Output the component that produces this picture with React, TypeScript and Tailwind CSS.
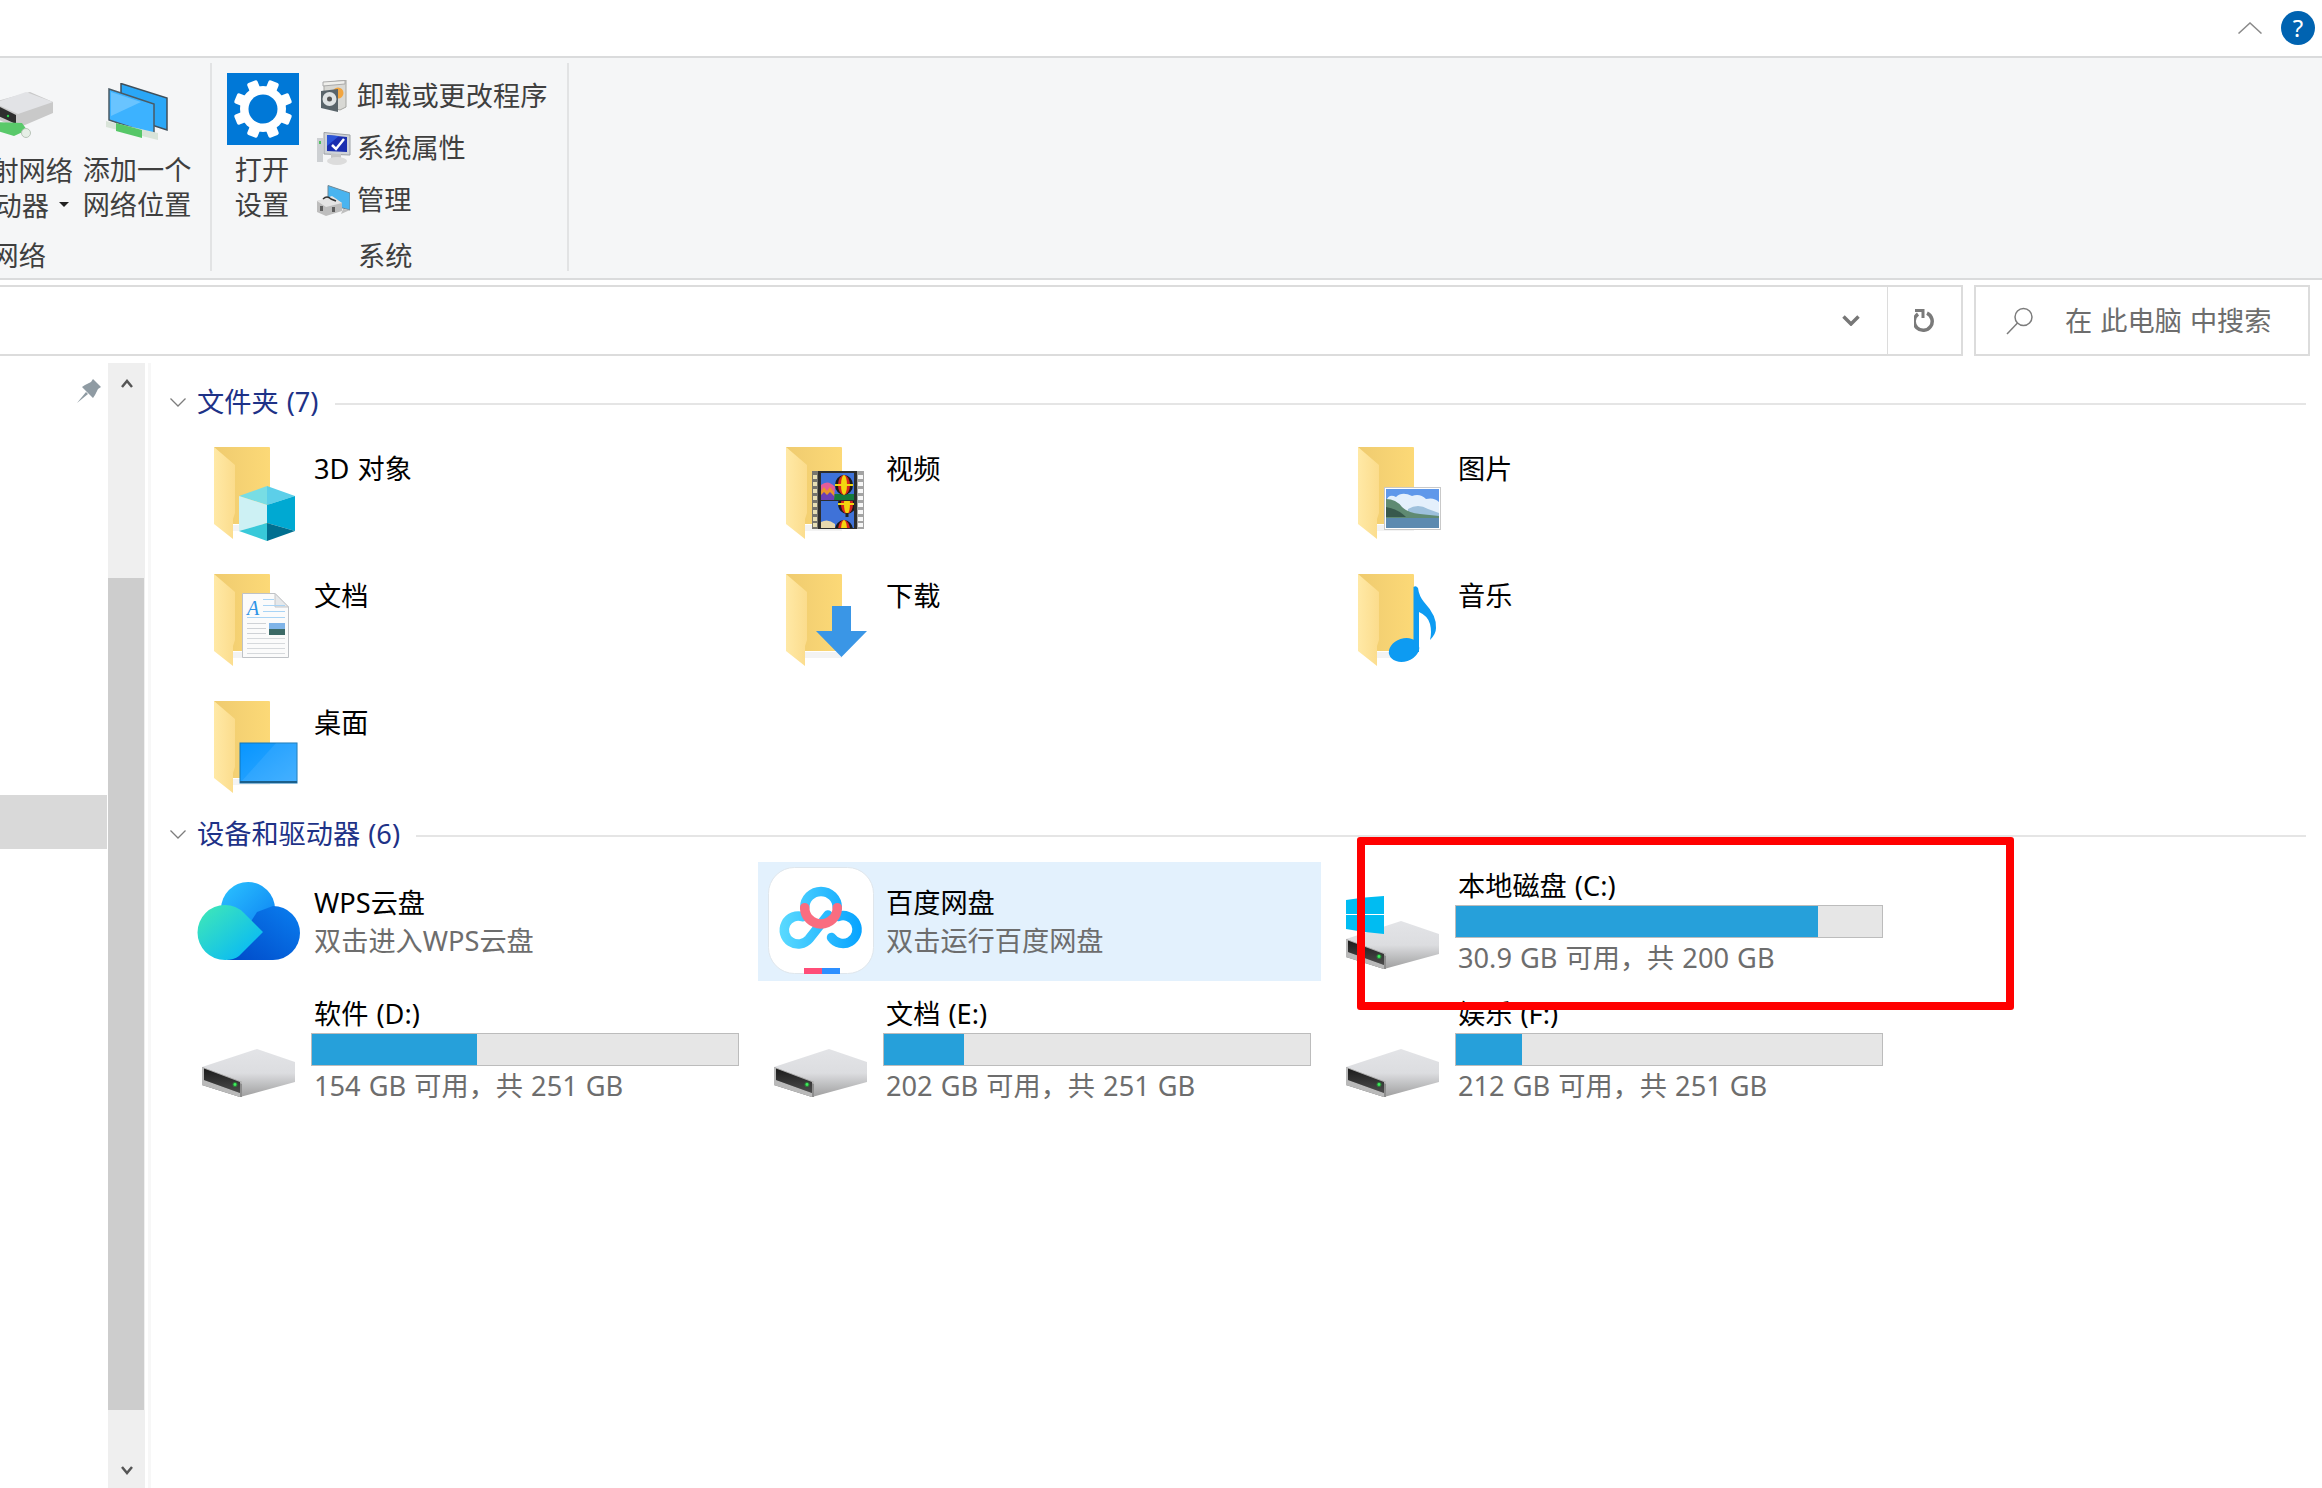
import React from 'react';

const FolderIcon = ({ children }: { children?: React.ReactNode }) => (
  <svg width="90" height="100" viewBox="0 0 90 100" className="mt-[11px] ml-[28px] shrink-0">
    <defs>
      <linearGradient id="folderBack" x1="0" x2="1" y1="0" y2="0">
        <stop offset="0" stopColor="#efcb6f" />
        <stop offset="1" stopColor="#fcd977" />
      </linearGradient>
      <linearGradient id="folderFront" x1="0" x2="1" y1="0" y2="0">
        <stop offset="0" stopColor="#ffe9a6" />
        <stop offset="1" stopColor="#fbdc8c" />
      </linearGradient>
    </defs>
    <path d="M0 0H55a1 1 0 0 1 1 1V77H14Z" fill="url(#folderBack)" />
    <path d="M19 78H56V84H19Z" fill="#f3f3f3" />
    <path d="M0 0L21 18V66L19 72V92L0 77Z" fill="url(#folderFront)" />
    {children}
  </svg>
);

const CubeOverlay = () => (
  <g>
    <path d="M53 39L81 49L53 58Z" fill="#5ccfe9" />
    <path d="M53 39L25 49L53 58Z" fill="#78dde4" />
    <path d="M25 49L53 58V76L25 84Z" fill="#cdf1f4" />
    <path d="M81 49L53 58V76L81 84Z" fill="#00a9d2" />
    <path d="M25 84L53 76V94Z" fill="#38c9d9" />
    <path d="M81 84L53 76V94Z" fill="#006f90" />
  </g>
);

const Balloon = ({ cx, cy }: { cx: number; cy: number }) => (
  <g>
    <ellipse cx={cx} cy={cy} rx="9" ry="10" fill="#1a1a1a" />
    <ellipse cx={cx} cy={cy} rx="6" ry="10" fill="#d7261e" />
    <ellipse cx={cx} cy={cy} rx="3" ry="10" fill="#f3d60f" />
    <path d={`M${cx - 9} ${cy}H${cx + 9}`} stroke="#f3d60f" strokeWidth="2" />
  </g>
);

const VideoOverlay = () => (
  <g>
    <rect x="26" y="24" width="6" height="58" fill="#77756d" />
    <rect x="71" y="24" width="7" height="58" fill="#a3a3a3" />
    {[28, 35, 42, 49, 56, 63, 70, 76].map((y) => (
      <g key={y}>
        <rect x="27" y={y} width="4" height="4" fill="#e8dfb4" />
        <rect x="72" y={y} width="5" height="4" fill="#f6f6f6" />
      </g>
    ))}
    <rect x="32" y="24" width="39" height="58" fill="#2d2d2d" />
    <svg x="35" y="26" width="33" height="27" viewBox="35 26 33 27">
      <rect x="35" y="26" width="33" height="27" fill="#3f72d8" />
      <rect x="35" y="47" width="33" height="6" fill="#157a3c" />
      <path d="M35 53V38Q42 32 49 40L48 53Z" fill="#e45c98" />
      <path d="M35 44L38 40L41 44L44 40L48 45V53H35Z" fill="#e8962a" />
      <path d="M35 48L38 45L41 48L44 45L48 49V53H35Z" fill="#6b3fb5" />
      <Balloon cx={58} cy={38} />
    </svg>
    <svg x="35" y="54" width="33" height="27" viewBox="35 54 33 27">
      <rect x="35" y="54" width="33" height="27" fill="#3f72d8" />
      <Balloon cx={61} cy={57} />
      <rect x="59.500" y="66" width="3" height="4" fill="#222" />
      <Balloon cx={58} cy={83} />
      <path d="M35 81V75Q42 71 49 77V81Z" fill="#e7d8ae" />
    </svg>
  </g>
);

const PhotoOverlay = () => (
  <g>
    <rect x="26.500" y="40.500" width="56" height="42" fill="#fff" stroke="#c9c9c9" />
    <rect x="28" y="42" width="53" height="39" fill="#5f98ea" />
    <path d="M28 54Q31 46 38 50Q44 44 54 49Q62 46 68 52Q76 50 81 55V70H28Z" fill="#e4f0fc" />
    <path d="M50 62Q60 56 70 62L81 66V70H50Z" fill="#9dc0dc" />
    <path d="M28 52Q38 52 44 60Q50 66 62 67L81 69V71H28Z" fill="#5f8a72" />
    <path d="M28 60Q40 62 48 70H28Z" fill="#38594d" />
    <rect x="28" y="71" width="53" height="10" fill="#5c8ab0" />
  </g>
);

const DocOverlay = () => (
  <g>
    <path d="M28.500 19.500H61L74.500 33V83.500H28.500Z" fill="#fbfbfb" stroke="#bfc2c6" />
    <path d="M61 19.500V33H74.500Z" fill="#e6e8ea" stroke="#c4c6c9" />
    <text x="33" y="41" fontSize="20" fontStyle="italic" fontFamily="Liberation Serif, serif" fill="#2d93e6">
      A
    </text>
    <path d="M49 25.500H60M49 31.500H71M49 37.500H71M33 43.500H71" stroke="#a9d4f5" />
    {[49, 54, 59].map((y) => (
      <path key={y} d="M33 0H52" transform={`translate(0 ${y + 0.5})`} stroke="#cfd2d6" />
    ))}
    {[64, 69, 74, 79].map((y) => (
      <path key={y} d="M33 0H71" transform={`translate(0 ${y + 0.5})`} stroke="#d6d9dc" />
    ))}
    <rect x="55" y="49" width="16" height="12" fill="#7fb4e8" />
    <rect x="55" y="55" width="16" height="6" fill="#3c6a66" />
  </g>
);

const DownloadOverlay = () => (
  <path d="M46 32H65V57H81L55.500 83L30 57H46Z" fill="#3a96e6" />
);

const MusicOverlay = () => (
  <g fill="#0d9bf2">
    <ellipse cx="46" cy="76" rx="15.500" ry="11.500" transform="rotate(-18 46 76)" />
    <path d="M55.500 13Q58 11 60 14Q61 22 66 28Q79 42 78 54Q78 60 72 66Q74 58 72 50Q70 42 61 38V78H55.500Z" />
  </g>
);

const DesktopOverlay = () => (
  <g>
    <defs>
      <linearGradient id="desktopFill" x1="0" x2="1" y1="0" y2="1">
        <stop offset="0" stopColor="#0795ff" />
        <stop offset="1" stopColor="#36aaff" />
      </linearGradient>
    </defs>
    <rect x="26" y="42" width="57" height="40" fill="url(#desktopFill)" stroke="#1276b8" />
    <path d="M26 82L62 42H83V82Z" fill="#ffffff" opacity="0.08" />
    <rect x="26" y="80" width="57" height="2" fill="#1a5f8c" />
  </g>
);

const DriveIcon = () => (
  <svg width="93" height="48" viewBox="0 0 93 48" className="block">
    <defs>
      <linearGradient id="driveSide" x1="0" x2="0" y1="0" y2="1">
        <stop offset="0" stopColor="#e3e4e7" />
        <stop offset="0.5" stopColor="#dcdde0" />
        <stop offset="1" stopColor="#9f9f9f" />
      </linearGradient>
      <linearGradient id="driveFront" x1="0" x2="0" y1="0" y2="1">
        <stop offset="0" stopColor="#1c1c1c" />
        <stop offset="1" stopColor="#4c4c4c" />
      </linearGradient>
    </defs>
    <path d="M55 0L93 13V33L38 48L0 36V18Z" fill="url(#driveSide)" />
    <path d="M0 18L40 33V48L38 48L0 36Z" fill="#8d8d8d" />
    <path d="M0 18L40 33V35L2 20V31L38 44L38 48L0 36Z" fill="#b9b9b9" />
    <path d="M2 19.500L38 33V44L2 31Z" fill="url(#driveFront)" />
    <circle cx="33" cy="35.500" r="2.500" fill="#1ecb3a" opacity="0.45" />
    <circle cx="33" cy="35.500" r="1.400" fill="#3cf05c" />
  </svg>
);

const WindowsLogo = () => (
  <svg width="38" height="38" viewBox="0 0 38 38" className="block">
    <path d="M0 4L18 1.500V18H0Z" fill="#00bcf2" />
    <path d="M19 1.500L38 0V18H19Z" fill="#00bcf2" />
    <path d="M0 19H18V36L0 33Z" fill="#00bcf2" />
    <path d="M19 19H38V38L19 36Z" fill="#00bcf2" />
  </svg>
);

const WpsCloud = () => (
  <svg width="104" height="78" viewBox="0 0 104 78" className="mt-[20px] ml-[11px] shrink-0">
    <defs>
      <linearGradient id="wpsTop" x1="0" x2="1" y1="0" y2="1">
        <stop offset="0" stopColor="#2cc4ff" />
        <stop offset="1" stopColor="#0a7cf2" />
      </linearGradient>
      <linearGradient id="wpsRight" x1="0" x2="1" y1="1" y2="0">
        <stop offset="0" stopColor="#0049c8" />
        <stop offset="1" stopColor="#0a7ff0" />
      </linearGradient>
      <linearGradient id="wpsLeft" x1="0" x2="1" y1="0" y2="1">
        <stop offset="0" stopColor="#42eab4" />
        <stop offset="1" stopColor="#00b2ff" />
      </linearGradient>
    </defs>
    <circle cx="51" cy="27" r="27" fill="url(#wpsTop)" />
    <path d="M76 24A27 27 0 0 1 76 78H30L60 30Z" fill="url(#wpsRight)" />
    <path d="M66 50L42 74Q37 78 28 78A27.500 27.500 0 1 1 28 23Q39 23 47 31Z" fill="url(#wpsLeft)" />
  </svg>
);

const BaiduIcon = () => (
  <svg width="106" height="107" viewBox="0 0 106 107" className="mt-[5px] ml-[10px] shrink-0">
    <defs>
      <linearGradient id="baiduBlue" gradientUnits="userSpaceOnUse" x1="12" x2="95" y1="0" y2="0">
        <stop offset="0" stopColor="#5adaff" />
        <stop offset="1" stopColor="#05a2ff" />
      </linearGradient>
    </defs>
    <rect x="0.500" y="0.500" width="105" height="106" rx="26" fill="#fff" stroke="#dfe6ec" />
    <g fill="none" stroke="url(#baiduBlue)" strokeWidth="9.500" strokeLinecap="round">
      <path d="M36.700 40.700A16.300 16.300 0 1 1 69.300 40.700" />
      <path d="M60 48L41 72A14 14 0 1 1 35 49.800" />
      <path d="M70 49.500A14 14 0 1 1 63.500 70.500" />
    </g>
    <path d="M36.700 40.700A16.300 16.300 0 0 0 69.300 40.700" fill="none" stroke="#f96d80" strokeWidth="9.500" strokeLinecap="round" />
    <rect x="36" y="101" width="18" height="6" fill="#ff4d78" />
    <rect x="54" y="101" width="18" height="6" fill="#2d8fff" />
  </svg>
);

const Bar = ({ used }: { used: number }) => (
  <div className="mt-px h-[33px] w-[428px] border border-[#bcbcbc] bg-[#e6e6e6]">
    <div className="h-full bg-[#26a0da]" style={{ width: `${used}%` }} />
  </div>
);

const DriveTile = ({ name, used, free, system }: { name: string; used: number; free: string; system?: boolean }) => (
  <div className="flex h-[119px]">
    <div className="relative w-[125px] shrink-0 pt-[59px] pl-[16px]">
      <DriveIcon />
      {system && (
        <div className="absolute top-[34px] left-[16px]">
          <WindowsLogo />
        </div>
      )}
    </div>
    <div className="pt-[6px]">
      <div className="pl-[3px] leading-[36px] text-black">{name}</div>
      <Bar used={used} />
      <div className="mt-[2px] pl-[3px] leading-[36px] text-[#6d6d6d]">{free}</div>
    </div>
  </div>
);

const AppTile = ({ icon, name, desc, selected }: { icon: React.ReactNode; name: string; desc: string; selected?: boolean }) => (
  <div className={`flex h-[119px] ${selected ? 'bg-[#e3f1fd]' : ''}`}>
    <div className="w-[128px] shrink-0">{icon}</div>
    <div className="pt-[23px]">
      <div className="leading-[36px] text-black">{name}</div>
      <div className="mt-[2px] leading-[36px] text-[#6d6d6d]">{desc}</div>
    </div>
  </div>
);

const SectionHeader = ({ title, className }: { title: string; className: string }) => (
  <div className={`flex h-[36px] items-center pl-[19px] ${className}`}>
    <svg width="16" height="9" viewBox="0 0 16 9" className="shrink-0">
      <path d="M0.500 0.500L8 8L15.500 0.500" fill="none" stroke="#7d7d7d" strokeWidth="1.300" />
    </svg>
    <span className="ml-[11px] whitespace-nowrap text-[#1e3287]">{title}</span>
    <div className="mt-[3px] ml-[16px] h-[2px] flex-1 bg-[#e5e5e5]" />
  </div>
);

const GearTile = () => (
  <svg width="72" height="72" viewBox="0 0 72 72" className="block">
    <rect width="72" height="72" fill="#0078d7" />
    <circle cx="36" cy="36" r="23" fill="#fff" />
    {[22.5, 67.5, 112.5, 157.5, 202.5, 247.5, 292.5, 337.5].map((a) => (
      <rect key={a} x="30.500" y="6.500" width="11" height="12" rx="2" fill="#fff" transform={`rotate(${a} 36 36)`} />
    ))}
    <circle cx="36" cy="36" r="14.500" fill="#0078d7" />
  </svg>
);

const RibbonDrive = () => (
  <svg width="60" height="46" viewBox="0 0 60 46" className="block">
    <path d="M36 0L59 10V21L24 36L0 26V10Z" fill="#c9c9c9" />
    <path d="M32 0L59 10L24 22L0 11Z" fill="#e2e3e6" />
    <path d="M0 12L22 23V32L0 22Z" fill="#2e2e2e" />
    <circle cx="14" cy="24" r="1.200" fill="#2bd14a" />
    <path d="M0 30L28 31L33 38L20 44L0 38Z" fill="#59c96a" />
    <circle cx="32" cy="41" r="4.500" fill="#e6efe6" stroke="#b9c4b9" />
  </svg>
);

const NetworkPlace = () => (
  <svg width="62" height="58" viewBox="0 0 62 58" className="block">
    <path d="M15 0.500L61 15V47L15 32Z" fill="#2aa7f7" stroke="#3f4f5a" strokeWidth="1.500" />
    <path d="M3 6L48 21V52L3 37Z" fill="#3cb2ff" stroke="#4a5a64" strokeWidth="1.500" />
    <path d="M5 9L35 19L5 33Z" fill="#69c4ff" />
    <path d="M0 38L52 50V57L0 44Z" fill="#d9e4d9" />
    <path d="M10 40L36 47V55L10 48Z" fill="#56c768" />
  </svg>
);

const ProgramIcon = () => (
  <svg width="26" height="32" viewBox="0 0 26 32" className="block">
    <path d="M3 3L25 0V27L19 30L3 26Z" fill="#d8d8d4" stroke="#a6a6a2" />
    <path d="M2 2L24 0.500V4L2 6Z" fill="#efefec" stroke="#aaa" />
    <circle cx="17" cy="13" r="5.500" fill="#f2a53f" />
    <path d="M0 11L17 9V32L0 28Z" fill="#59646a" />
    <circle cx="8.500" cy="19" r="7" fill="#dfe3e4" />
    <circle cx="8.500" cy="19" r="2.500" fill="#555" />
  </svg>
);

const MonitorIcon = () => (
  <svg width="34" height="33" viewBox="0 0 34 33" className="block">
    <path d="M7 0.500L33 3V23L7 22Z" fill="#cfd3d8" stroke="#9da1a6" />
    <path d="M10 3L30 5V20L10 19Z" fill="#1b2fb0" />
    <path d="M10 3L22 4L10 14Z" fill="#2c55d8" />
    <path d="M15 13L19 17L27 7" fill="none" stroke="#fff" strokeWidth="2.500" />
    <rect x="0" y="6" width="6" height="24" fill="#cdd0d3" />
    <rect x="2" y="9" width="2" height="3" fill="#4cc15e" />
    <path d="M14 22H24V26H14Z" fill="#c6c6c6" />
    <ellipse cx="20" cy="29" rx="10" ry="4" fill="#dcdcdc" />
  </svg>
);

const ManageIcon = () => (
  <svg width="33" height="31" viewBox="0 0 33 31" className="block">
    <path d="M11 0.500L33 8V25L11 19Z" fill="#49b4f0" stroke="#6f8794" />
    <path d="M26 24L33 25L24 29Z" fill="#bfbfbf" />
    <path d="M0 16L16 12L25 18V26L9 31L0 27Z" fill="#bdbdbd" />
    <path d="M0 16L15 11L25 18L9 22Z" fill="#e4e4e4" />
    <path d="M6 14Q10 10 14 14L19 16" fill="none" stroke="#333" strokeWidth="1.500" />
    <rect x="3" y="21" width="3" height="5" fill="#5d5d5d" />
    <rect x="15" y="22" width="3" height="5" fill="#5d5d5d" />
  </svg>
);

const folders = [
  { name: '3D 对象', overlay: <CubeOverlay /> },
  { name: '视频', overlay: <VideoOverlay /> },
  { name: '图片', overlay: <PhotoOverlay /> },
  { name: '文档', overlay: <DocOverlay /> },
  { name: '下载', overlay: <DownloadOverlay /> },
  { name: '音乐', overlay: <MusicOverlay /> },
  { name: '桌面', overlay: <DesktopOverlay /> },
];

export default function App() {
  return (
    <div className="relative flex h-[1488px] w-[2322px] flex-col overflow-hidden bg-white font-['Noto_Sans','Noto_Sans_CJK_SC',sans-serif] text-[27.2px] [word-spacing:1px]">
      <div className="flex h-[58px] shrink-0 items-center justify-end border-b-2 border-[#dadbdc] pr-[7px]">
        <svg width="24" height="12" viewBox="0 0 24 12">
          <path d="M0.500 11.500L12 1L23.500 11.500" fill="none" stroke="#8a8a8a" strokeWidth="1.500" />
        </svg>
        <div className="ml-[19px] flex h-[34px] w-[34px] items-center justify-center rounded-full bg-[#0063b1] text-[24px] leading-none text-white">
          ?
        </div>
      </div>

      <div className="flex h-[222px] shrink-0 border-b-2 border-[#dadbdc] bg-[#f5f6f7] pt-[5px] pb-[7px] text-[#3f3f3f]">
        <div className="flex w-[212px] shrink-0 flex-col border-r-2 border-[#e2e3e4]">
          <div className="flex flex-1">
            <div className="flex w-[73px] flex-col items-end overflow-hidden">
              <div className="mt-[29px] pr-[19px]">
                <RibbonDrive />
              </div>
              <div className="mt-[15px] leading-[35px] whitespace-nowrap">映射网络</div>
              <div className="flex items-center pr-[4px] leading-[35px] whitespace-nowrap">
                驱动器
                <span className="mt-[-3px] ml-[10px] h-0 w-0 border-x-[5px] border-t-[5px] border-x-transparent border-t-[#222]" />
              </div>
            </div>
            <div className="ml-[10px] flex w-[108px] flex-col items-center">
              <div className="mt-[20px] flex h-[59px] items-start">
                <NetworkPlace />
              </div>
              <div className="mt-[10px] text-center leading-[35px] whitespace-nowrap">
                添加一个
                <br />
                网络位置
              </div>
            </div>
          </div>
          <div className="flex h-[32px] w-[46px] justify-end overflow-hidden leading-[34px] whitespace-nowrap">网络</div>
        </div>

        <div className="flex w-[357px] shrink-0 flex-col border-r-2 border-[#e2e3e4]">
          <div className="flex flex-1 pt-[10px] pl-[15px]">
            <div className="flex w-[72px] flex-col items-center">
              <GearTile />
              <div className="mt-[7px] pr-[2px] text-center leading-[35px]">
                打开
                <br />
                设置
              </div>
            </div>
            <div className="mt-[5px] ml-[17px] flex flex-col gap-[16px]">
              {[
                { label: '卸载或更改程序', icon: <ProgramIcon /> },
                { label: '系统属性', icon: <MonitorIcon /> },
                { label: '管理', icon: <ManageIcon /> },
              ].map((row) => (
                <div key={row.label} className="flex h-[36px] items-center whitespace-nowrap">
                  <div className="flex w-[41px] shrink-0 justify-center pr-[6px]">{row.icon}</div>
                  {row.label}
                </div>
              ))}
            </div>
          </div>
          <div className="h-[32px] pl-[146px] leading-[34px]">系统</div>
        </div>
      </div>

      <div className="mt-[5px] flex h-[71px] shrink-0">
        <div className="flex w-[1963px] border-y-2 border-r-2 border-[#dcdcdc]">
          <div className="flex flex-1 items-center justify-end pr-[27px]">
            <svg width="18" height="11" viewBox="0 0 18 11">
              <path d="M1.500 1.500L9 9L16.500 1.500" fill="none" stroke="#777" strokeWidth="3.500" />
            </svg>
          </div>
          <div className="flex w-[74px] items-center justify-center border-l border-[#dcdcdc]">
            <svg width="22" height="24" viewBox="0 0 22 24">
              <path d="M4 5A9 9 0 1 0 13 4.200" fill="none" stroke="#7a7a7a" strokeWidth="3.500" />
              <path d="M1 1.500H9V9" fill="none" stroke="#7a7a7a" strokeWidth="3" />
            </svg>
          </div>
        </div>
        <div className="ml-[11px] flex w-[336px] items-center border-2 border-[#dcdcdc] pl-[30px] text-[#6d6d6d]">
          <svg width="28" height="28" viewBox="0 0 28 28" className="shrink-0">
            <circle cx="17.500" cy="10" r="8.500" fill="none" stroke="#7c7c7c" strokeWidth="1.500" />
            <path d="M11.500 16L1 27" stroke="#7c7c7c" strokeWidth="1.500" />
          </svg>
          <span className="mt-[2px] ml-[31px] whitespace-nowrap">在 此电脑 中搜索</span>
        </div>
      </div>

      <div className="flex min-h-0 flex-1">
        <div className="w-[108px] shrink-0">
          <svg width="24" height="24" viewBox="0 0 24 24" className="mt-[23px] ml-[77px] block">
            <path d="M16 0L24 8L21 10L18 16L16 19L5 8L8 6L14 3Z" fill="#8f9ba3" />
            <path d="M9 13L0 24L11 15Z" fill="#8f9ba3" />
          </svg>
          <div className="mt-[392px] h-[54px] w-[107px] bg-[#d9d9d9]" />
        </div>
        <div className="mt-[7px] flex w-[37px] shrink-0 flex-col bg-[#efefef]">
          <div className="flex h-[215px] justify-center pt-[16px]">
            <svg width="12" height="9" viewBox="0 0 12 9">
              <path d="M1 8L6 2L11 8" fill="none" stroke="#555" strokeWidth="2.500" />
            </svg>
          </div>
          <div className="h-[832px] w-[36px] bg-[#cdcdcd]" />
          <div className="flex flex-1 justify-center pt-[56px]">
            <svg width="12" height="9" viewBox="0 0 12 9">
              <path d="M1 1L6 7L11 1" fill="none" stroke="#555" strokeWidth="2.500" />
            </svg>
          </div>
        </div>
        <div className="mt-[7px] ml-[3px] w-[3px] shrink-0 bg-[#f7f7f7]" />

        <div className="flex-1 pt-[28px] pr-[16px]">
          <SectionHeader title="文件夹 (7)" className="" />
          <div className="mt-[16px] ml-[35px] grid grid-cols-[563px_563px_563px] gap-x-[9px]">
            {folders.map((item) => (
              <div key={item.name} className="flex h-[127px]">
                <div className="w-[128px] shrink-0">
                  <FolderIcon>{item.overlay}</FolderIcon>
                </div>
                <div className="pt-[15px] leading-[36px] text-black">{item.name}</div>
              </div>
            ))}
          </div>

          <SectionHeader title="设备和驱动器 (6)" className="mt-[-1px]" />
          <div className="mt-[10px] ml-[35px] grid grid-cols-[563px_563px_563px] gap-x-[9px] gap-y-[9px]">
            <AppTile icon={<WpsCloud />} name="WPS云盘" desc="双击进入WPS云盘" />
            <AppTile icon={<BaiduIcon />} name="百度网盘" desc="双击运行百度网盘" selected />
            <DriveTile name="本地磁盘 (C:)" used={85} free="30.9 GB 可用，共 200 GB" system />
            <DriveTile name="软件 (D:)" used={38.8} free="154 GB 可用，共 251 GB" />
            <DriveTile name="文档 (E:)" used={18.8} free="202 GB 可用，共 251 GB" />
            <DriveTile name="娱乐 (F:)" used={15.6} free="212 GB 可用，共 251 GB" />
          </div>
        </div>
      </div>

      {/* red annotation drawn over the screenshot */}
      <div className="absolute top-[837px] left-[1357px] h-[173px] w-[657px] rounded-[3px] border-[8px] border-[#ff0000]" />
    </div>
  );
}
